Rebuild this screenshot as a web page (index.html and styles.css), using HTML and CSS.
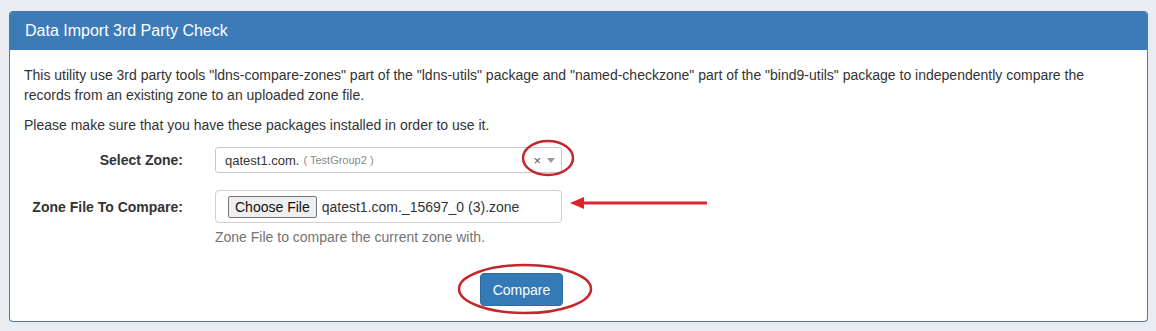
FILE: index.html
```html
<!DOCTYPE html>
<html>
<head>
	<title>Data Import 3rd Party Check</title>
	<link rel="stylesheet" href="styles.css">
</head>
<body>

	<div class="panel">
		<div class="panel_heading">Data Import 3rd Party Check</div>
		<div class="panel_body">
			<p class="intro">This utility use 3rd party tools "ldns-compare-zones" part of the "ldns-utils" package and "named-checkzone" part of the "bind9-utils" package to independently compare the records from an existing zone to an uploaded zone file.</p>
			<p class="intro">Please make sure that you have these packages installed in order to use it.</p>

			<div class="form_row zone_row">
				<label class="form_label">Select Zone:</label>
				<div class="select_box">
					<span class="zone_name">qatest1.com.</span>
					<span class="zone_group">( TestGroup2 )</span>
					<span class="select_clear">&times;</span>
					<span class="select_arrow"></span>
				</div>
			</div>

			<div class="form_row file_row">
				<label class="form_label">Zone File To Compare:</label>
				<div class="file_box">
					<span class="file_button">Choose File</span>
					<span class="file_name">qatest1.com._15697_0 (3).zone</span>
				</div>
			</div>

			<div class="form_row help_row">
				<span></span>
				<div class="help_text">Zone File to compare the current zone with.</div>
			</div>

			<div class="actions">
				<button class="btn_compare">Compare</button>
			</div>
		</div>
	</div>

	<svg class="markup" width="1156" height="331" viewBox="0 0 1156 331">
		<ellipse cx="548" cy="158" rx="25" ry="17" fill="none" stroke="#c4262c" stroke-width="2.5"/>
		<line x1="707" y1="203" x2="582" y2="203" stroke="#d9252b" stroke-width="3"/>
		<polygon points="570,203 584,197 584,209" fill="#d9252b"/>
		<ellipse cx="525" cy="289" rx="66" ry="24" fill="none" stroke="#c4262c" stroke-width="2.5"/>
	</svg>

</body>
</html>
```

FILE: styles.css
```css
body {
	margin: 0;
	padding: 11px 8px 9px 9px;
	background-color: #e9edf1;
	font-family: "Liberation Sans", Arial, sans-serif;
	font-size: 14px;
	color: #333;
	position: relative;
}

.panel {
	background-color: white;
	border: 1px solid #56789a;
	border-top: none;
	border-radius: 4px;
	overflow: hidden;
}

.panel_heading {
	background-color: #3d7ab8;
	color: white;
	font-size: 16px;
	height: 39px;
	line-height: 39px;
	padding-left: 15px;
}

.panel_body {
	padding: 15px 14px 15px 14px;
	height: 271px;
	box-sizing: border-box;
}

.intro {
	margin: 0 0 10px 0;
	line-height: 20px;
}

.form_row {
	display: grid;
	grid-template-columns: 159px 347px;
	column-gap: 32px;
	align-items: center;
}

.zone_row {
	margin-top: 12px;
}

.form_label {
	text-align: right;
	font-weight: bold;
}

.select_box {
	height: 26px;
	border: 1px solid #c8c8c8;
	border-radius: 3px;
	box-sizing: border-box;
	display: flex;
	align-items: center;
	padding-left: 9px;
}

.zone_name {
	font-size: 13px;
}

.zone_group {
	font-size: 11px;
	color: #888;
	margin-left: 4px;
}

.select_clear {
	margin-left: auto;
	font-size: 13px;
	color: #555;
}

.select_arrow {
	width: 0;
	height: 0;
	border-left: 4px solid transparent;
	border-right: 4px solid transparent;
	border-top: 5px solid #999;
	margin: 0 6px 0 6px;
}

.file_row {
	margin-top: 17px;
}

.file_box {
	height: 33px;
	border: 1px solid #d0d0d0;
	border-radius: 4px;
	box-sizing: border-box;
	display: flex;
	align-items: center;
	padding-left: 12px;
	font-size: 14px;
}

.file_button {
	background-color: #efefef;
	border: 1px solid #767676;
	border-radius: 2px;
	padding: 2px 6px;
	height: 22px;
	box-sizing: border-box;
	line-height: 16px;
	color: #111;
}

.file_name {
	margin-left: 5px;
}

.help_row {
	margin-top: 5px;
}

.help_text {
	color: #737373;
	line-height: 18px;
}

.actions {
	padding-left: 456px;
	margin-top: 27px;
}

.btn_compare {
	background-color: #337ab7;
	border: 1px solid #2e6da4;
	border-radius: 4px;
	color: white;
	font-family: "Liberation Sans", Arial, sans-serif;
	font-size: 14px;
	width: 83px;
	height: 33px;
}

.markup {
	position: absolute;
	left: 0;
	top: 0;
	pointer-events: none;
}
```
